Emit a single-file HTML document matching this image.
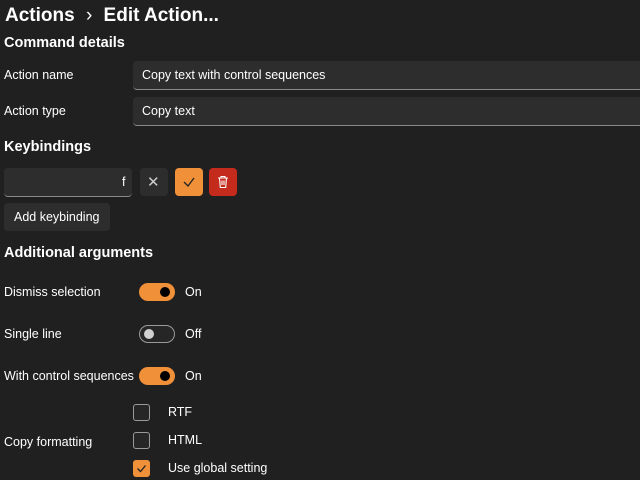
<!DOCTYPE html>
<html><head><style>
body{margin:0;width:640px;height:480px;background:#202020;color:#fff;font-family:"Liberation Sans",sans-serif;overflow:hidden;position:relative}
.a{position:absolute;white-space:nowrap}
.t{font-size:12.5px}
.h{font-size:14.5px;font-weight:bold}
.box{position:absolute;background:#2d2d2d;border-radius:4px;border-bottom:1px solid #8a8a8a;box-sizing:border-box}
.btn{position:absolute;border-radius:4px;box-sizing:border-box}
.tog{position:absolute;width:36px;height:18px;border-radius:10px;box-sizing:border-box}
.on{background:#f0913a}
.on::after{content:"";position:absolute;right:5px;top:4px;width:10px;height:10px;border-radius:50%;background:#000}
.off{border:1px solid #9a9a9a;background:#262626}
.off::after{content:"";position:absolute;left:4px;top:3px;width:10px;height:10px;border-radius:50%;background:#d0d0d0}
.cb{position:absolute;left:133px;width:17px;height:17px;border:1px solid #9a9a9a;border-radius:3px;box-sizing:border-box;background:#262626}
</style></head><body>
<div class="a" style="left:5px;top:5px;font-size:19px;font-weight:bold">Actions <span style="font-weight:normal;margin:0 6px">&#x203A;</span> Edit Action...</div>
<div class="a h" style="left:4px;top:35px">Command details</div>
<div class="a t" style="left:4px;top:68px">Action name</div>
<div class="box" style="left:133px;top:61px;width:510px;height:29px"></div>
<div class="a t" style="left:142px;top:68px">Copy text with control sequences</div>
<div class="a t" style="left:4px;top:104px">Action type</div>
<div class="box" style="left:133px;top:97px;width:510px;height:29px"></div>
<div class="a t" style="left:142px;top:104px">Copy text</div>
<div class="a h" style="left:4px;top:139px">Keybindings</div>
<div class="box" style="left:4px;top:168px;width:128px;height:29px"></div>
<div class="a t" style="left:122px;top:175px">f</div>
<div class="btn" style="left:140px;top:168px;width:28px;height:28px;background:#2d2d2d"></div>
<div class="a" style="left:147px;top:173px;font-size:15px;color:#ccc">&#x2715;</div>
<div class="btn" style="left:175px;top:168px;width:28px;height:28px;background:#f0913a"></div>
<svg class="a" style="left:182px;top:175px" width="14" height="14"><path d="M2 7 L6 11 L12 3" stroke="#222" stroke-width="1.3" fill="none"/></svg>
<div class="btn" style="left:209px;top:168px;width:28px;height:28px;background:#c42b1c"></div>
<svg class="a" style="left:216px;top:175px" width="14" height="14"><path d="M2 3H12M5 3V1.5H9V3M3.5 3L4.3 12.5H9.7L10.5 3M6 5.5V10M8 5.5V10" stroke="#fff" stroke-width="1.1" fill="none"/></svg>
<div class="btn" style="left:4px;top:203px;width:106px;height:28px;background:#2d2d2d"></div>
<div class="a t" style="left:14px;top:210px">Add keybinding</div>
<div class="a h" style="left:4px;top:245px">Additional arguments</div>
<div class="a t" style="left:4px;top:285px">Dismiss selection</div>
<div class="tog on" style="left:139px;top:283px"></div>
<div class="a t" style="left:185px;top:285px">On</div>
<div class="a t" style="left:4px;top:327px">Single line</div>
<div class="tog off" style="left:139px;top:325px"></div>
<div class="a t" style="left:185px;top:327px">Off</div>
<div class="a t" style="left:4px;top:369px">With control sequences</div>
<div class="tog on" style="left:139px;top:367px"></div>
<div class="a t" style="left:185px;top:369px">On</div>
<div class="cb" style="top:404px"></div>
<div class="a t" style="left:168px;top:405px">RTF</div>
<div class="a t" style="left:4px;top:435px">Copy formatting</div>
<div class="cb" style="top:432px"></div>
<div class="a t" style="left:168px;top:433px">HTML</div>
<div class="cb" style="top:460px;background:#f0913a;border-color:#f0913a"></div>
<svg class="a" style="left:135px;top:462px" width="13" height="13"><path d="M2.5 6.5 L5.5 9.5 L10.5 3.5" stroke="#222" stroke-width="1.3" fill="none"/></svg>
<div class="a t" style="left:168px;top:461px">Use global setting</div>
</body></html>
